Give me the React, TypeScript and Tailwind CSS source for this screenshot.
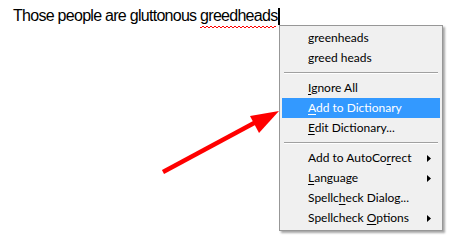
import React from "react";

type Item =
  | { kind: "sep" }
  | { kind: "item"; before: string; key?: string; after?: string; sub?: boolean; active?: boolean };

const items: Item[] = [
  { kind: "item", before: "greenheads" },
  { kind: "item", before: "greed heads" },
  { kind: "sep" },
  { kind: "item", before: "", key: "I", after: "gnore All" },
  { kind: "item", before: "", key: "A", after: "dd to Dictionary", active: true },
  { kind: "item", before: "", key: "E", after: "dit Dictionary..." },
  { kind: "sep" },
  { kind: "item", before: "Add to AutoCo", key: "r", after: "rect", sub: true },
  { kind: "item", before: "", key: "L", after: "anguage", sub: true },
  { kind: "item", before: "Spellc", key: "h", after: "eck Dialog..." },
  { kind: "item", before: "Spellcheck ", key: "O", after: "ptions", sub: true },
];

const waveDots = Array.from({ length: 38 }, (_, i) => i * 2);

function Squiggle() {
  // red wavy underline under the misspelled word
  return (
    <svg className="absolute left-0 top-[100%] mt-[2px]" width="76" height="3" viewBox="0 0 76 3" shapeRendering="crispEdges">
      {waveDots.map((x) => (
        <rect key={x} x={x} y={(x / 2) % 2 === 0 ? 1 : 0} width="2" height="1" fill="#ff0000" />
      ))}
    </svg>
  );
}

export default function App() {
  return (
    <div className="relative w-[454px] h-[243px] bg-white overflow-hidden">
      <div
        className="pl-[13px] pt-[7px] text-[16px] leading-[18px] tracking-[-0.72px] text-black"
        style={{ fontFamily: '"Liberation Sans", Arial, sans-serif' }}
      >
        Those people are gluttonous{" "}
        <span className="relative">
          greedheads
          <Squiggle />
        </span>
        <span className="inline-block w-[2px] h-[17px] bg-black align-[-4px] ml-[1px]" />
      </div>

      {/* arrow */}
      <svg className="absolute left-0 top-0" width="454" height="243">
        <line x1="163" y1="172" x2="256" y2="122" stroke="#ff0000" strokeWidth="4.5" />
        <polygon points="279,111 250,116 259,133" fill="#ff0000" />
      </svg>

      {/* context menu */}
      <div
        className="absolute left-[279px] top-[25px] w-[164px] bg-[#f0f0f0] border border-[#979797] py-[2px] shadow-[2px_2px_2px_rgba(0,0,0,0.35)]"
        style={{ fontFamily: 'Lato, "Noto Sans", sans-serif' }}
      >
        {items.map((it, i) =>
          it.kind === "sep" ? (
            <div key={i} className="h-[10px] flex flex-col justify-center px-[4px]">
              <div className="h-px bg-[#a0a0a0]" />
              <div className="h-px bg-white" />
            </div>
          ) : (
            <div
              key={i}
              className={`mx-[2px] h-[20px] flex items-center pl-[26px] pr-[8px] text-[12px] ${
                it.active ? "bg-[#3399ff] text-white" : "text-black"
              }`}
            >
              <span className="flex-1 whitespace-pre">
                {it.before}
                {it.key && <span className="underline underline-offset-2">{it.key}</span>}
                {it.after}
              </span>
              {it.sub && (
                <svg width="4" height="7" viewBox="0 0 4 7" className="mr-[1px]">
                  <polygon points="0,0 4,3.5 0,7" fill="#000" />
                </svg>
              )}
            </div>
          )
        )}
      </div>
    </div>
  );
}
